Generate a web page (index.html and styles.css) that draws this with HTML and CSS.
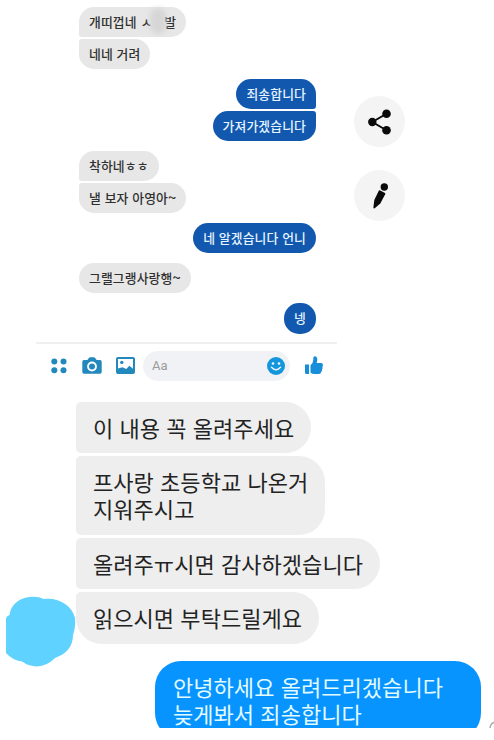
FILE: index.html
```
<!DOCTYPE html>
<html lang="ko">
  <head>
    <meta charset="UTF-8" />
    <meta name="viewport" content="width=device-width, initial-scale=1.0" />
    <title>Messages</title>
    <link rel="stylesheet" href="styles.css">
  </head>
  <body>
    <div class="top">
      <div class="chat">
        <div class="messages">
          <div class="bubble first">개띠껍네 ㅅ<span class="masked">ㅣ</span>발</div>
          <div class="bubble last">네네 거려</div>
          <div class="bubble me first turn">죄송합니다</div>
          <div class="bubble me last">가져가겠습니다</div>
          <div class="bubble first turn">착하네ㅎㅎ</div>
          <div class="bubble last">낼 보자 아영아<span class="tilde">~</span></div>
          <div class="bubble me turn">네 알겠습니다 언니</div>
          <div class="bubble turn">그랠그랭사랑행<span class="tilde">~</span></div>
          <div class="bubble me turn short">넹</div>
        </div>
        <div class="toolbar">
          <svg class="icon-dots" width="16" height="16" viewBox="0 0 16 16">
            <circle cx="3.3" cy="3.5" r="3" />
            <circle cx="12.5" cy="3.5" r="3" />
            <circle cx="3.3" cy="12.3" r="3" />
            <circle cx="12.5" cy="12.3" r="3" />
          </svg>
          <svg class="icon-camera" width="20" height="17" viewBox="0 0 20 17">
            <path fill-rule="evenodd" d="M2 3h3.300l1.800-2.200Q7.500.3 8.200.3h3.600q.7 0 1.100.5L14.700 3H18q1.700 0 1.700 1.700V15q0 1.700-1.700 1.700H2Q.3 16.700.3 15V4.700Q.3 3 2 3zM10 4.600a4.900 4.900 0 1 0 0 9.800 4.900 4.900 0 0 0 0-9.800z" />
            <circle cx="10" cy="9.500" r="3" />
          </svg>
          <svg class="icon-photo" width="19" height="17" viewBox="0 0 19 17">
            <path fill-rule="evenodd" d="M2 0h15q2 0 2 2v13q0 2-2 2H2q-2 0-2-2V2q0-2 2-2zM2 2v9.500l4.500-1.300 3.800 1.700 3-3.200 3.700 3V2z" />
            <circle cx="5.800" cy="5.400" r="1.700" />
          </svg>
          <div class="input">
            <span>Aa</span>
            <svg width="18" height="18" viewBox="0 0 18 18">
              <circle cx="9" cy="9" r="9" fill="#1496dc" />
              <circle cx="6" cy="6.500" r="1.300" fill="#eef4fa" />
              <circle cx="12" cy="6.500" r="1.300" fill="#eef4fa" />
              <path d="M4.500 10.200q4.500 5 9 0" fill="none" stroke="#eef4fa" stroke-width="1.500" stroke-linecap="round" />
            </svg>
          </div>
          <svg class="icon-like" width="18" height="19" viewBox="0 0 18 19">
            <path d="M0 8.500h4V18H1.500Q0 18 0 16.500z" />
            <path d="M5.500 9.200Q8.300 7 8.300 3.500V1.800Q8.400.3 9.800.3q2.500.4 2.500 3.500 0 1.700-.7 3.300h4.300q2.100.2 2.100 2 0 1-.7 1.600.8 1.800-.4 2.700.4 1.700-.7 2.400-.1 2.200-2.300 2.200H9.300Q7 18 5.500 16.500z" />
          </svg>
        </div>
      </div>
      <div class="actions">
        <div class="action">
          <svg width="24" height="28" viewBox="0 0 24 28">
            <path d="M18.500 5.700L4.300 14l14.200 8.200" fill="none" stroke="#0a0a0a" stroke-width="1.900" />
            <circle cx="4.300" cy="14" r="4.200" />
            <circle cx="18.500" cy="5.700" r="4.300" />
            <circle cx="18.500" cy="22.200" r="4.300" />
          </svg>
        </div>
        <div class="action">
          <svg width="18" height="28" viewBox="0 0 18 28">
            <circle cx="13.300" cy="5" r="3.700" />
            <path d="M8.800 8.300l5.200 2.800q.5.400.2 1.100L9.300 21.500l-5.600 4.800q-1.200.5-1.300-.8L3.300 18l4.500-9.200q.4-.8 1-.5z" />
          </svg>
        </div>
      </div>
    </div>

    <div class="bottom">
      <svg class="avatar" width="70" height="72" viewBox="0 0 70 72">
        <path d="M0 22Q1 20 3.500 19C5 8 14 1 26 .7Q33 .5 38 3C54 1.500 66 10 69 22Q70 30 67 39C67 51 60 58 49 62Q41 70 31 70.500Q22 70 16 65.500Q6 64 0 57z" />
      </svg>
      <div class="messages large">
        <div class="bubble first">이 내용 꼭 올려주세요</div>
        <div class="bubble middle">프사랑 초등학교 나온거<br />지워주시고</div>
        <div class="bubble middle">올려주ㅠ시면 감사하겠습니다</div>
        <div class="bubble last">읽으시면 부탁드릴게요</div>
        <div class="bubble me">안녕하세요 올려드리겠습니다<br />늦게봐서 죄송합니다</div>
      </div>
      <svg class="status" width="5" height="7" viewBox="0 0 5 7">
        <circle cx="7" cy="7" r="6" />
      </svg>
    </div>
  </body>
</html>
```

FILE: styles.css
```
* {
  margin: 0;
  padding: 0;
  box-sizing: border-box;
}
body {
  font-family: "Noto Sans CJK KR", "Liberation Sans", sans-serif;
  background: #fff;
  width: 494px;
  height: 740px;
  overflow: hidden;
}
svg {
  display: block;
  flex: none;
}
.top {
  display: flex;
  height: 402px;
}
.chat {
  width: 337px;
  padding-left: 36px;
}
.messages {
  display: flex;
  flex-direction: column;
  align-items: flex-start;
  gap: 2px;
}
.chat .messages {
  height: 342px;
  padding: 7px 21px 0 43px;
}
.bubble {
  height: 30px;
  padding: 0 10px;
  background: #e7e7e7;
  color: #303030;
  border-radius: 15px;
  font-size: 12.8px;
  font-weight: 500;
  line-height: 29px;
  letter-spacing: 0.15px;
  white-space: nowrap;
}
.bubble.first {
  border-bottom-left-radius: 3px;
}
.bubble.last {
  border-top-left-radius: 3px;
}
.bubble.me {
  align-self: flex-end;
  background: #1158ae;
  color: #e6f4ff;
  border-radius: 15px;
}
.bubble.me.first {
  border-bottom-right-radius: 3px;
}
.bubble.me.last {
  border-top-right-radius: 3px;
}
.turn {
  margin-top: 8px;
}
.short {
  width: 32px;
  height: 31px;
}
.tilde {
  font-size: 14.5px;
  line-height: 1;
}
/* smudge over the censored letter */
.masked {
  position: relative;
  color: transparent;
}
.masked::after {
  content: "";
  position: absolute;
  left: -2px;
  top: -4px;
  width: 16px;
  height: 26px;
  border-radius: 8px;
  background: #d6d6d6;
  filter: blur(2.5px);
}
.toolbar {
  display: flex;
  align-items: center;
  height: 45px;
  padding-left: 15px;
  border-top: 2px solid #f0f0f0;
  fill: #2389bd;
}
.icon-camera {
  margin-left: 15px;
}
.icon-photo {
  margin-left: 14px;
}
.input {
  display: flex;
  align-items: center;
  justify-content: space-between;
  width: 147px;
  height: 30px;
  margin-left: 8px;
  padding: 0 5px 0 9px;
  border-radius: 15px;
  background: #f1f2f6;
  color: #9b9b9b;
  font-family: Roboto, sans-serif;
  font-size: 13px;
}
.icon-like {
  margin-left: 15px;
  fill: #168fd8;
}
.actions {
  display: flex;
  flex-direction: column;
  gap: 23px;
  padding: 96px 0 0 17px;
}
.action {
  display: flex;
  align-items: center;
  justify-content: center;
  width: 51px;
  height: 51px;
  border-radius: 50%;
  background: #f4f4f4;
  fill: #0a0a0a;
}
.bottom {
  display: flex;
  height: 326px;
  padding-left: 6px;
  overflow: hidden;
}
.avatar {
  margin-top: 194px;
  fill: #5fd2ff;
}
.large {
  width: 405px;
  gap: 3px;
}
.large .bubble {
  flex: none;
  height: auto;
  padding: 12px 17px 12.4px;
  background: #eee;
  color: #232323;
  border-radius: 5px 26px 26px 5px;
  font-size: 22px;
  font-weight: 400;
  line-height: 27px;
  letter-spacing: 0.05px;
}
.large .bubble.last {
  border-bottom-left-radius: 26px;
}
.large .bubble.me {
  width: 326px;
  margin-top: 14px;
  padding-left: 18px;
  background: #0894ff;
  color: #e2fbff;
  border-radius: 26px;
}
.status {
  align-self: flex-end;
  margin-left: 8px;
  fill: none;
  stroke: #aaa;
  stroke-width: 1.5;
}
```
